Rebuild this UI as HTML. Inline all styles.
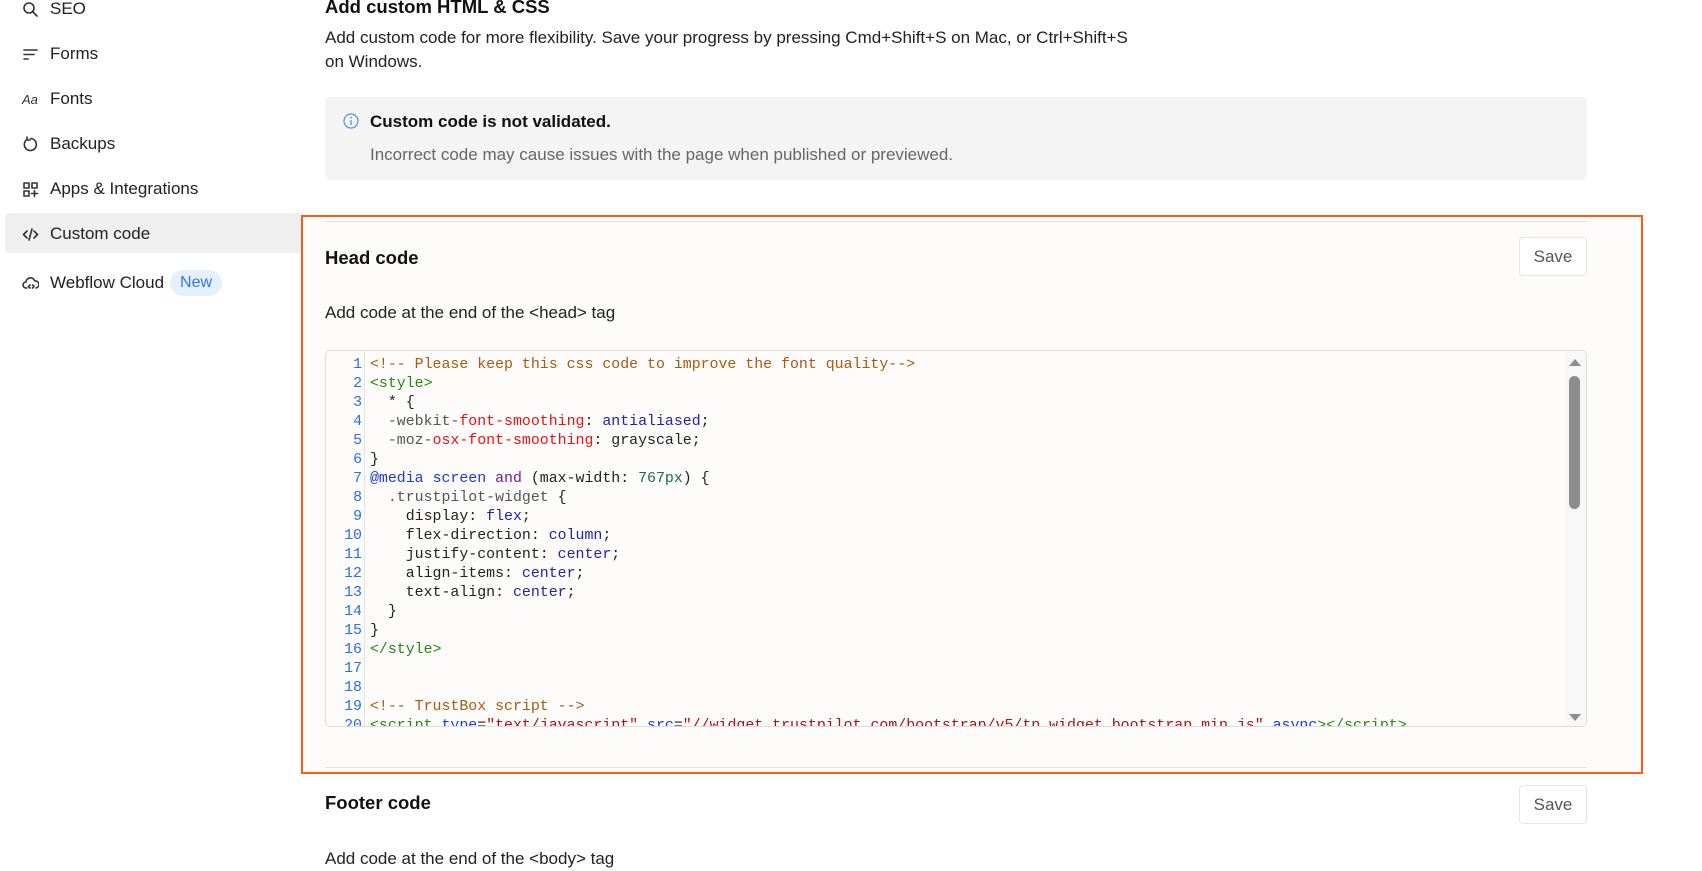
<!DOCTYPE html>
<html><head><meta charset="utf-8">
<style>
*{box-sizing:border-box;margin:0;padding:0}
body{width:1702px;height:871px;overflow:hidden;background:#fff;font-family:"Liberation Sans",sans-serif;color:#1e1e1e;position:relative}
.abs{position:absolute}
.nav{position:absolute;left:22px;display:flex;align-items:center;font-size:17px;color:#222;height:24px}
.nav svg{width:17px;height:17px;margin-right:11px;stroke:#333;fill:none;stroke-width:1.6;stroke-linecap:round;stroke-linejoin:round}
.mono{font-family:"Liberation Mono",monospace;font-size:14.9px}
.ln{position:absolute;left:0;width:36px;text-align:right;color:#2a70e0}
.cl{position:absolute;left:44px;white-space:pre;color:#222}
.c{color:#a85a10}.t{color:#228811}.p{color:#ee1111}.a{color:#2222aa}.k{color:#7a1a9a}.d{color:#1a3ad8}.n{color:#1a6a4a}.q{color:#555}.s{color:#aa1111}
.save{position:absolute;left:1519px;width:68px;height:39px;border:1px solid #e6e6e6;border-radius:4px;background:#fff;font-size:17px;color:#555;display:flex;align-items:center;justify-content:center}
</style></head><body>

<div class="nav" style="top:-3px"><svg viewBox="0 0 17 17"><circle cx="7" cy="7" r="5"/><path d="M11 11l4 4"/></svg>SEO</div>
<div class="nav" style="top:42px"><svg viewBox="0 0 17 17"><path d="M2 4h13M2 8.5h10M2 13h4"/></svg>Forms</div>
<div class="nav" style="top:87px"><span style="font-size:13px;font-style:italic;width:17px;margin-right:11px;color:#333">Aa</span>Fonts</div>
<div class="nav" style="top:132px"><svg viewBox="0 0 17 17"><path d="M5 3.5A6 6 0 1 0 8.5 2.5"/><path d="M5 1v3h3"/></svg>Backups</div>
<div class="nav" style="top:177px"><svg viewBox="0 0 17 17"><rect x="2" y="2" width="5" height="5"/><rect x="10" y="2" width="5" height="5"/><rect x="2" y="10" width="5" height="5"/><path d="M12.5 9.5v6M9.5 12.5h6"/></svg>Apps &amp; Integrations</div>
<div class="abs" style="left:5px;top:213px;width:296px;height:40px;background:#efefef;border-radius:5px 0 0 5px"></div>
<div class="nav" style="top:222px"><svg viewBox="0 0 17 17"><path d="M5 5l-3.5 3.5L5 12M12 5l3.5 3.5L12 12M10 3l-3 11"/></svg>Custom code</div>
<div class="nav" style="top:271px"><svg viewBox="0 0 17 17"><path d="M5 13H4a3 3 0 0 1 0-6 4.5 4.5 0 0 1 8.8-1A3.5 3.5 0 0 1 14 13"/><path d="M8 10l-1.5 1.5L8 13M10.5 10l1.5 1.5-1.5 1.5"/></svg>Webflow Cloud<span style="margin-left:6px;background:#e6f0fd;color:#2b7ae6;border-radius:14px;padding:4px 10px;font-size:16px">New</span></div>

<div class="abs" style="left:325px;top:-4px;font-size:18.5px;font-weight:bold;color:#111">Add custom HTML &amp; CSS</div>
<div class="abs" style="left:325px;top:26px;font-size:17px;line-height:24px;color:#222;white-space:nowrap">Add custom code for more flexibility. Save your progress by pressing Cmd+Shift+S on Mac, or Ctrl+Shift+S<br>on Windows.</div>

<div class="abs" style="left:325px;top:97px;width:1262px;height:83px;background:#f4f4f4;border-radius:5px"></div>
<svg class="abs" style="left:343px;top:113px" width="16" height="16" viewBox="0 0 16 16"><circle cx="8" cy="8" r="7" fill="none" stroke="#5a8fe0" stroke-width="1.2"/><path d="M8 7v5" stroke="#5a8fe0" stroke-width="1.3"/><circle cx="8" cy="4.6" r=".9" fill="#5a8fe0"/></svg>
<div class="abs" style="left:370px;top:112px;font-size:17px;font-weight:bold;color:#111">Custom code is not validated.</div>
<div class="abs" style="left:370px;top:145px;font-size:17px;color:#666">Incorrect code may cause issues with the page when published or previewed.</div>

<div class="abs" style="left:301px;top:215px;width:1342px;height:559px;border:2.5px solid #ff5a14;background:#fdfcfb"></div>
<div class="abs" style="left:325px;top:221px;width:1262px;height:1px;background:#e2e2e2"></div>
<div class="abs" style="left:325px;top:247px;font-size:18.5px;font-weight:bold;color:#111">Head code</div>
<div class="save" style="top:237px">Save</div>
<div class="abs" style="left:325px;top:303px;font-size:17px;color:#222">Add code at the end of the &lt;head&gt; tag</div>

<div class="abs mono" style="left:325px;top:350px;width:1262px;height:377px;border:1px solid #dcdcdc;border-radius:5px;background:#fdfcfb;overflow:hidden">
 <div class="abs" style="left:38px;top:0;width:1px;height:100%;background:#e4e4e4"></div>
 <div class="abs" style="left:1239px;top:0;width:22px;height:100%;background:#f8f8f8"></div>
 <div class="abs" style="left:1243px;top:25px;width:11px;height:133px;background:#8d8d8d;border-radius:6px"></div>
 <div class="abs" style="left:1243px;top:8px;width:0;height:0;border-left:6px solid transparent;border-right:6px solid transparent;border-bottom:7px solid #8d8d8d"></div>
 <div class="abs" style="left:1243px;top:363px;width:0;height:0;border-left:6px solid transparent;border-right:6px solid transparent;border-top:7px solid #8d8d8d"></div>
 <div style="position:absolute;top:5px;left:0;line-height:19px">
  <div class="ln" style="top:0">1</div><div class="cl" style="top:0"><span class="c">&lt;!-- Please keep this css code to improve the font quality--&gt;</span></div>
  <div class="ln" style="top:19px">2</div><div class="cl" style="top:19px"><span class="t">&lt;style&gt;</span></div>
  <div class="ln" style="top:38px">3</div><div class="cl" style="top:38px">  * {</div>
  <div class="ln" style="top:57px">4</div><div class="cl" style="top:57px">  <span class="q">-webkit-</span><span class="p">font-smoothing</span>: <span class="a">antialiased</span>;</div>
  <div class="ln" style="top:76px">5</div><div class="cl" style="top:76px">  <span class="q">-moz-</span><span class="p">osx-font-smoothing</span>: grayscale;</div>
  <div class="ln" style="top:95px">6</div><div class="cl" style="top:95px">}</div>
  <div class="ln" style="top:114px">7</div><div class="cl" style="top:114px"><span class="d">@media</span> <span class="d">screen</span> <span class="k">and</span> (max-width: <span class="n">767px</span>) {</div>
  <div class="ln" style="top:133px">8</div><div class="cl" style="top:133px">  <span class="q">.trustpilot-widget</span> {</div>
  <div class="ln" style="top:152px">9</div><div class="cl" style="top:152px">    display: <span class="a">flex</span>;</div>
  <div class="ln" style="top:171px">10</div><div class="cl" style="top:171px">    flex-direction: <span class="a">column</span>;</div>
  <div class="ln" style="top:190px">11</div><div class="cl" style="top:190px">    justify-content: <span class="a">center</span>;</div>
  <div class="ln" style="top:209px">12</div><div class="cl" style="top:209px">    align-items: <span class="a">center</span>;</div>
  <div class="ln" style="top:228px">13</div><div class="cl" style="top:228px">    text-align: <span class="a">center</span>;</div>
  <div class="ln" style="top:247px">14</div><div class="cl" style="top:247px">  }</div>
  <div class="ln" style="top:266px">15</div><div class="cl" style="top:266px">}</div>
  <div class="ln" style="top:285px">16</div><div class="cl" style="top:285px"><span class="t">&lt;/style&gt;</span></div>
  <div class="ln" style="top:304px">17</div>
  <div class="ln" style="top:323px">18</div>
  <div class="ln" style="top:342px">19</div><div class="cl" style="top:342px"><span class="c">&lt;!-- TrustBox script --&gt;</span></div>
  <div class="ln" style="top:361px">20</div><div class="cl" style="top:361px"><span class="t">&lt;script</span> <span class="d">type</span>=<span class="s">"text/javascript"</span> <span class="d">src</span>=<span class="s">"//widget.trustpilot.com/bootstrap/v5/tp.widget.bootstrap.min.js"</span> <span class="d">async</span><span class="t">&gt;&lt;/script&gt;</span></div>
 </div>
</div>

<div class="abs" style="left:325px;top:767px;width:1262px;height:1px;background:#e2e2e2"></div>
<div class="abs" style="left:325px;top:792px;font-size:18.5px;font-weight:bold;color:#111">Footer code</div>
<div class="save" style="top:785px">Save</div>
<div class="abs" style="left:325px;top:849px;font-size:17px;color:#222">Add code at the end of the &lt;body&gt; tag</div>
</body></html>
